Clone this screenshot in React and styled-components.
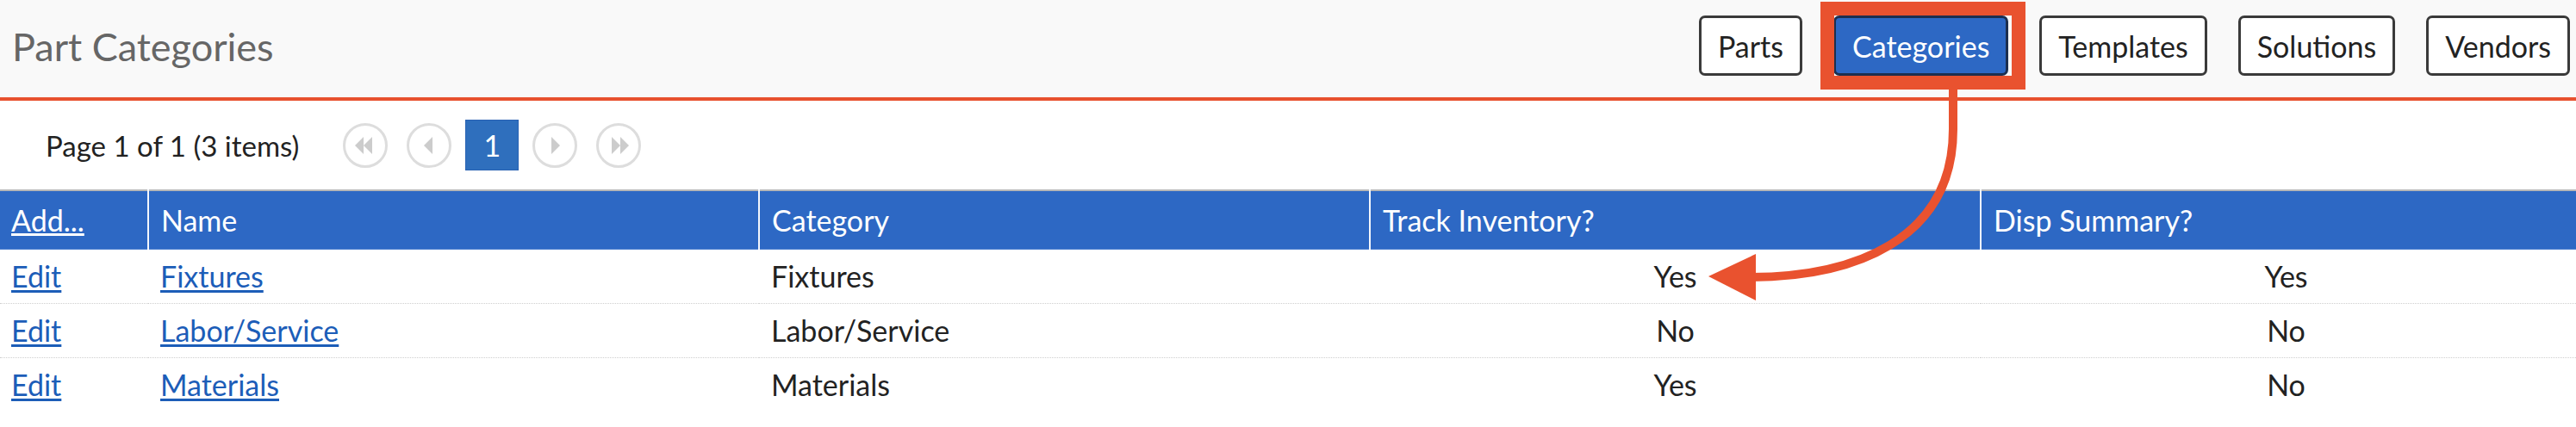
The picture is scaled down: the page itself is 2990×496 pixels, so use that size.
import React from 'react';
import styled, { createGlobalStyle } from 'styled-components';

const GlobalStyle = createGlobalStyle`
  html, body {
    margin: 0;
    padding: 0;
    background: #fff;
    overflow: hidden;
  }
  * {
    box-sizing: border-box;
  }
  body {
    font-family: Lato, 'Liberation Sans', sans-serif;
    color: #222;
  }
`;

const Page = styled.div`
  position: relative;
  width: 2990px;
  height: 496px;
  overflow: hidden;
`;

const Header = styled.header`
  display: flex;
  align-items: center;
  justify-content: space-between;
  height: 117px;
  padding: 0 7px 0 14px;
  background: #f9f9f9;
  border-bottom: 4px solid #e8512e;
`;

const Title = styled.h1`
  margin: 0 0 6px;
  font-size: 45px;
  font-weight: 400;
  color: #666;
`;

const Nav = styled.nav`
  display: flex;
  gap: 36px;
  align-self: flex-start;
  margin-top: 18px;
`;

const NavButton = styled.button`
  height: 70px;
  padding: 0 19px;
  border: 3px solid ${({ $active }) => ($active ? '#1c2f4f' : '#3a3a3a')};
  border-radius: 7px;
  background: ${({ $active }) => ($active ? '#2d68c4' : '#fff')};
  color: ${({ $active }) => ($active ? '#fff' : '#222')};
  font-family: Lato, 'Liberation Sans', sans-serif;
  font-size: 34px;
  cursor: pointer;
`;

const Pager = styled.div`
  display: flex;
  align-items: center;
  gap: 16px;
  height: 103px;
  padding-left: 53px;
`;

const PageInfo = styled.span`
  font-size: 33px;
  color: #222;
  margin-right: 32px;
`;

const CircleButton = styled.svg`
  display: block;
  width: 52px;
  height: 52px;
  margin: 0 3px;
`;

const PageNumber = styled.span`
  display: flex;
  align-items: center;
  justify-content: center;
  width: 62px;
  height: 59px;
  margin: 0 -3px;
  background: #2f6fbd;
  border: 1px solid #2962b3;
  color: #fff;
  font-size: 34px;
`;

const Table = styled.table`
  width: 3008px;
  table-layout: fixed;
  border-collapse: collapse;
  border-top: 2px solid #b8b8b8;
  font-size: 34px;
`;

const HeadCell = styled.th`
  height: 68px;
  padding: 0 14px;
  background: #2d68c4;
  color: #fff;
  font-weight: 400;
  text-align: left;
  border-left: 2px solid #f3f6fc;
  border-bottom: 1px solid #4d7fcf;
  &:first-child {
    border-left: none;
    padding-left: 13px;
  }
  a {
    color: #fff;
  }
`;

const Cell = styled.td`
  height: 63px;
  padding: 0 14px;
  text-align: ${({ $center }) => ($center ? 'center' : 'left')};
  color: #222;
  &:first-child {
    padding-left: 13px;
  }
`;

const Row = styled.tr`
  border-bottom: 1px dotted #cfcfcf;
  &:last-child {
    border-bottom: none;
  }
`;

const Link = styled.a`
  color: #1c5db8;
  text-decoration: underline;
  text-underline-offset: 3px;
`;

const Annotation = styled.svg`
  position: absolute;
  top: 0;
  left: 0;
  pointer-events: none;
`;

const PagerIcon = ({ dir, double }) => {
  const tri = (x) =>
    dir === 'left'
      ? `${x},26 ${x + 10},16 ${x + 10},36`
      : `${x + 10},26 ${x},16 ${x},36`;
  return (
    <CircleButton viewBox="0 0 52 52">
      <circle cx="26" cy="26" r="24.5" fill="#fff" stroke="#ddd" strokeWidth="3" />
      {double ? (
        <>
          <polygon points={tri(dir === 'left' ? 14 : 18)} fill="#ccc" />
          <polygon points={tri(dir === 'left' ? 24 : 28)} fill="#ccc" />
        </>
      ) : (
        <polygon points={tri(dir === 'left' ? 20 : 22)} fill="#ccc" />
      )}
    </CircleButton>
  );
};

const rows = [
  { name: 'Fixtures', track: 'Yes', disp: 'Yes' },
  { name: 'Labor/Service', track: 'No', disp: 'No' },
  { name: 'Materials', track: 'Yes', disp: 'No' },
];

const tabs = ['Parts', 'Categories', 'Templates', 'Solutions', 'Vendors'];

const App = () => (
  <Page>
    <GlobalStyle />
    <Header>
      <Title>Part Categories</Title>
      <Nav>
        {tabs.map((t) => (
          <NavButton key={t} $active={t === 'Categories'}>
            {t}
          </NavButton>
        ))}
      </Nav>
    </Header>

    <Pager>
      <PageInfo>Page 1 of 1 (3 items)</PageInfo>
      <PagerIcon dir="left" double />
      <PagerIcon dir="left" />
      <PageNumber>1</PageNumber>
      <PagerIcon dir="right" />
      <PagerIcon dir="right" double />
    </Pager>

    <Table>
      <colgroup>
        <col style={{ width: 172 }} />
        <col style={{ width: 709 }} />
        <col style={{ width: 709 }} />
        <col style={{ width: 709 }} />
        <col style={{ width: 709 }} />
      </colgroup>
      <thead>
        <tr>
          <HeadCell>
            <a href="#add">Add...</a>
          </HeadCell>
          <HeadCell>Name</HeadCell>
          <HeadCell>Category</HeadCell>
          <HeadCell>Track Inventory?</HeadCell>
          <HeadCell>Disp Summary?</HeadCell>
        </tr>
      </thead>
      <tbody>
        {rows.map((r) => (
          <Row key={r.name}>
            <Cell>
              <Link href="#edit">Edit</Link>
            </Cell>
            <Cell>
              <Link href="#name">{r.name}</Link>
            </Cell>
            <Cell>{r.name}</Cell>
            <Cell $center>{r.track}</Cell>
            <Cell $center>{r.disp}</Cell>
          </Row>
        ))}
      </tbody>
    </Table>

    {/* callout drawn over the page */}
    <Annotation width="2990" height="496" viewBox="0 0 2990 496">
      <rect x="2121" y="10" width="222" height="86" fill="none" stroke="#e9522f" strokeWidth="16" />
      <path
        d="M2267 100 L2267 150 C2267 280 2150 322 2030 322"
        fill="none"
        stroke="#e9522f"
        strokeWidth="10"
      />
      <polygon points="1983,321 2038,295 2038,349" fill="#e9522f" />
    </Annotation>
  </Page>
);

export default App;
